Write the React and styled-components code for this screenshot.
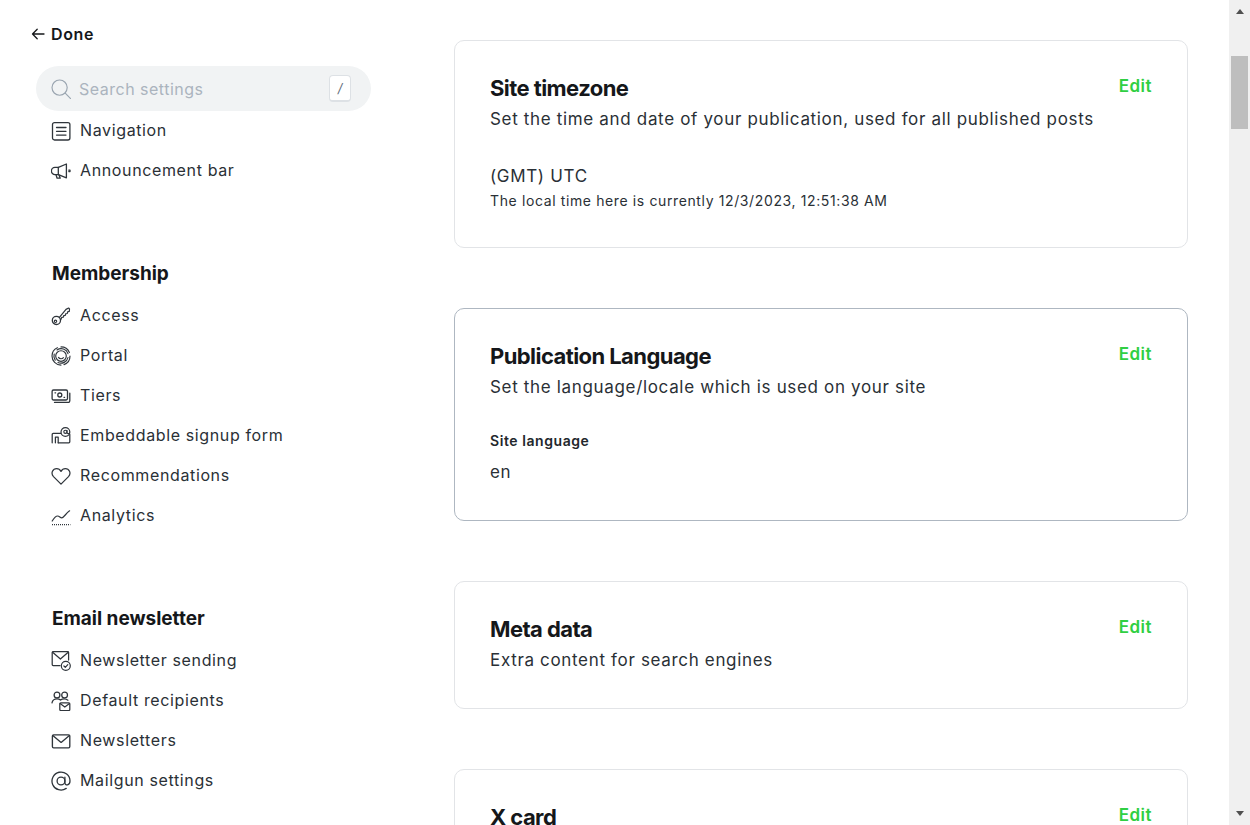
import React from "react";
import styled, { createGlobalStyle } from "styled-components";

const Global = createGlobalStyle`
  html, body { margin: 0; padding: 0; height: 100%; overflow: hidden; background: #fff; }
  body { font-family: Inter, "Liberation Sans", sans-serif; color: #15171a; }
  #root { height: 100%; }
`;

const Shell = styled.div`
  display: flex;
  height: 825px;
  overflow: hidden;
`;

const Page = styled.div`
  flex: 1;
  display: flex;
  min-width: 0;
  overflow: hidden;
`;

const Sidebar = styled.aside`
  width: 418px;
  flex: none;
  padding: 0 0 0 36px;
  box-sizing: content-box;
`;

const BackLink = styled.a`
  display: flex;
  align-items: center;
  gap: 6px;
  height: 20px;
  margin: 24px 0 0 -5px;
  font-size: 16px;
  font-weight: 600;
  letter-spacing: 0.6px;
  color: #15171a;
`;

const SearchBox = styled.div`
  display: flex;
  align-items: center;
  width: 335px;
  height: 45px;
  margin-top: 22px;
  padding: 0 20px 0 15px;
  box-sizing: border-box;
  border-radius: 23px;
  background: #f1f3f4;
`;

const Placeholder = styled.span`
  flex: 1;
  margin-left: 8px;
  font-size: 16px;
  letter-spacing: 0.5px;
  color: #abb4be;
`;

const Kbd = styled.span`
  width: 22px;
  height: 27px;
  box-sizing: border-box;
  display: flex;
  align-items: center;
  justify-content: center;
  border: 1px solid #dde1e5;
  border-bottom-width: 2px;
  border-radius: 4px;
  background: #fff;
  font-size: 13px;
  font-style: italic;
  color: #626d79;
`;

const Group = styled.section`
  margin-bottom: 71px;
`;

const GroupTitle = styled.h2`
  margin: 0 0 10px 16px;
  height: 24px;
  line-height: 24px;
  font-size: 19px;
  font-weight: 700;
  letter-spacing: -0.02px;
  color: #15171a;
`;

const Item = styled.a`
  display: flex;
  align-items: center;
  gap: 9px;
  height: 40px;
  padding-left: 15px;
  font-size: 16px;
  letter-spacing: 0.63px;
  color: #2a3036;
`;

const ItemLabel = styled.span`
  margin-bottom: 2px;
`;

const IconSvg = styled.svg`
  width: 20px;
  height: 20px;
  flex: none;
  fill: none;
  stroke: #2f353b;
  stroke-width: 1.15;
  stroke-linecap: round;
  stroke-linejoin: round;
`;

const Content = styled.main`
  flex: 1;
  min-width: 0;
  padding: 40px 41px 0 0;
  display: flex;
  flex-direction: column;
  gap: 60px;
`;

const Card = styled.section`
  flex: none;
  display: flex;
  justify-content: space-between;
  align-items: flex-start;
  box-sizing: border-box;
  min-height: ${(p) => p.$minHeight || 0}px;
  padding: 33px 35px 35px;
  border: 1px solid ${(p) => (p.$active ? "#aeb7c1" : "#e2e4e7")};
  border-radius: 10px;
  background: #fff;
`;

const CardBody = styled.div`
  min-width: 0;
`;

const CardTitle = styled.h3`
  margin: 0;
  height: 28px;
  line-height: 28px;
  font-size: 22px;
  font-weight: 700;
  letter-spacing: -0.57px;
  color: #15171a;
`;

const CardDesc = styled.p`
  margin: 4px 0 0;
  height: 26px;
  line-height: 26px;
  font-size: 17px;
  letter-spacing: 0.665px;
  color: #2a3036;
`;

const Value = styled.div`
  margin-top: ${(p) => p.$top}px;
  line-height: 26px;
  font-size: 17px;
  letter-spacing: 0.665px;
  color: #2a3036;
`;

const Hint = styled.div`
  margin-top: 2px;
  line-height: 20px;
  font-size: 14px;
  letter-spacing: 0.62px;
  color: #2a3036;
`;

const FieldLabel = styled.div`
  margin-top: 31px;
  line-height: 20px;
  font-size: 14px;
  font-weight: 600;
  letter-spacing: 0.57px;
  color: #22272c;
`;

const EditButton = styled.a`
  line-height: 24px;
  font-size: 17px;
  font-weight: 600;
  letter-spacing: 0.5px;
  color: #30cf43;
`;

const Scrollbar = styled.div`
  flex: none;
  width: 21px;
  height: 825px;
  display: flex;
  flex-direction: column;
  align-items: center;
  background: #f0f0f0;
`;

const Arrow = styled.span`
  width: 0;
  height: 0;
  flex: none;
  border-left: 4.5px solid transparent;
  border-right: 4.5px solid transparent;
  ${(p) =>
    p.$down
      ? "border-top: 5px solid #505050; margin: auto 0 9px;"
      : "border-bottom: 5px solid #505050; margin-top: 9px;"}
`;

const Thumb = styled.div`
  width: 17px;
  height: 73px;
  margin-top: 42px;
  flex: none;
  background: #bebebe;
`;

const Icon = ({ children }) => <IconSvg viewBox="0 0 20 20">{children}</IconSvg>;

const icons = {
  nav: (
    <>
      <rect x="1.5" y="1.6" width="17.4" height="17.4" rx="2" strokeWidth="1.3" />
      <path d="M5.5 6.5h9.5M5.5 10.3h9.5M5.5 14.1h9.5" strokeWidth="1.3" />
    </>
  ),
  megaphone: (
    <>
      <path d="M15.4 3v13.8L7.4 13.6H4a3 3 0 0 1 0-7.2h3.4z" strokeWidth="1.3" />
      <path d="M7.3 6.4v7.2M5 13.8l1.1 3.4h3.1l-1-3M17.8 9.2h1.2v1.4h-1.2" strokeWidth="1.3" />
    </>
  ),
  key: (
    <>
      <circle cx="5.4" cy="14.4" r="4.1" strokeWidth="1.3" />
      <circle cx="4.5" cy="15.3" r="1.2" />
      <path d="M8.2 11.6 15 3.4l2.6-1.4.9.9-.2 2.5-1.7.4-.3 1.7-1.7.3-.3 1.6-1.6.2-.3 1.5-1.6.2-.9 2.2" strokeWidth="1.2" />
    </>
  ),
  portal: (
    <>
      <path d="M10 .9a9.1 9.1 0 0 1 8.4 5.6M19 10a9.1 9.1 0 0 1-6 8.6M10 19.1A9.1 9.1 0 0 1 1 10a9 9 0 0 1 5.4-8.3" />
      <path d="M6 4a7.2 7.2 0 0 1 11 3.6M17 11.5A7.2 7.2 0 0 1 7 16.5M4.2 14.2A7.2 7.2 0 0 1 3.2 8" />
      <circle cx="10" cy="10" r="5.3" />
      <path d="M7.5 11.4A3 3 0 0 0 12.4 11.6" />
    </>
  ),
  tiers: (
    <>
      <rect x="1.1" y="4" width="15.4" height="10" rx="1.4" strokeWidth="1.3" />
      <circle cx="8.8" cy="9" r="2" strokeWidth="1.3" />
      <path d="M4 6.8h.6M13 11.3h.6" strokeWidth="1.3" />
      <path d="M18.8 7.2v7.6a1.6 1.6 0 0 1-1.6 1.6H3.5" strokeWidth="1.3" />
    </>
  ),
  embed: (
    <>
      <path d="M9.6 7.4H2.2a1 1 0 0 0-1 1v8.4" strokeWidth="1.25" />
      <path d="M18.8 8.4v7.4a1 1 0 0 1-1 1H7.2" strokeWidth="1.25" />
      <path d="M4.4 16.8v-5.6h2.8v5.6" strokeWidth="1.25" />
      <circle cx="14.4" cy="6" r="4.4" strokeWidth="1.25" />
      <circle cx="14.4" cy="5.8" r="1.6" />
      <path d="M16 4.4v2.2c0 1.2 1.6 1.2 2.4.6" />
    </>
  ),
  heart: (
    <path d="M10 18.1 2.5 10.6C-.7 7 2 2.7 5.6 2.7c1.8 0 3.4.9 4.4 2.7 1-1.8 2.6-2.7 4.4-2.7 3.6 0 6.3 4.3 3.1 7.9z" strokeWidth="1.25" />
  ),
  analytics: (
    <>
      <path d="M1.2 15c2-3.3 3.6-5 5.4-5 2 0 2.4 1.8 4.2 1.8 2 0 4-4.4 7.8-7" strokeWidth="1.2" />
      <path d="M1 18.6h18.4" strokeDasharray="1 1" strokeLinecap="butt" strokeWidth="1.3" />
    </>
  ),
  sending: (
    <>
      <path d="M9 14.6H2.2a1 1 0 0 1-1-1V1.6a1 1 0 0 1 1-1h14.4a1 1 0 0 1 1 1V9" strokeWidth="1.25" />
      <path d="M1.6 1.2l7.8 6.8 7.8-6.8" strokeWidth="1.25" />
      <circle cx="14.8" cy="14.8" r="4.5" strokeWidth="1.2" />
      <path d="M12.9 15l1.4 1.4 2.5-2.8" strokeWidth="1.2" />
    </>
  ),
  recipients: (
    <>
      <circle cx="6" cy="4" r="2.9" strokeWidth="1.25" />
      <circle cx="13.6" cy="4" r="2.9" strokeWidth="1.25" />
      <path d="M1 11.8c.5-2.6 2.4-4 5-4 1.5 0 2.6.4 3.5 1.2 1-.8 2.2-1.2 3.7-1.2 1.5 0 2.8.5 3.7 1.4" strokeWidth="1.25" />
      <rect x="8.8" y="11.9" width="10" height="7.6" rx="1" strokeWidth="1.25" />
      <path d="M9.1 12.6l4.7 3.4 4.7-3.4" strokeWidth="1.25" />
    </>
  ),
  mail: (
    <>
      <rect x="1.4" y="3.8" width="17.4" height="13" rx="1.2" strokeWidth="1.35" />
      <path d="M1.8 4.6l8.3 6.8 8.3-6.8" strokeWidth="1.35" />
    </>
  ),
  at: (
    <>
      <circle cx="10" cy="10" r="3.9" strokeWidth="1.3" />
      <path d="M13.9 6.2v5.6c0 3.2 5.1 3 5.1-1.8a9 9 0 1 0-3.8 7.4" strokeWidth="1.3" />
    </>
  ),
};

const NavItem = ({ icon, children }) => (
  <Item>
    <Icon>{icons[icon]}</Icon>
    <ItemLabel>{children}</ItemLabel>
  </Item>
);

const BackArrow = () => (
  <svg width="14" height="14" viewBox="0 0 14 14" fill="none" stroke="#15171a" strokeWidth="1.3" strokeLinecap="round" strokeLinejoin="round">
    <path d="M13 7H1.5M6.2 2.3 1.5 7l4.7 4.7" />
  </svg>
);

const SearchIcon = () => (
  <svg width="20" height="20" viewBox="0 0 20 20" fill="none" stroke="#9aa5b0" strokeWidth="1.15" strokeLinecap="round">
    <circle cx="8.6" cy="8.6" r="7.6" />
    <path d="M14.2 14.2 19.6 19.6" />
  </svg>
);

const SettingsCard = ({ title, desc, active, minHeight, children }) => (
  <Card $active={active} $minHeight={minHeight}>
    <CardBody>
      <CardTitle>{title}</CardTitle>
      {desc && <CardDesc>{desc}</CardDesc>}
      {children}
    </CardBody>
    <EditButton>Edit</EditButton>
  </Card>
);

export default function App() {
  return (
    <Shell>
      <Global />
      <Page>
        <Sidebar>
          <BackLink>
            <BackArrow />
            Done
          </BackLink>
          <SearchBox>
            <SearchIcon />
            <Placeholder>Search settings</Placeholder>
            <Kbd>/</Kbd>
          </SearchBox>
          <Group>
            <NavItem icon="nav">Navigation</NavItem>
            <NavItem icon="megaphone">Announcement bar</NavItem>
          </Group>
          <Group>
            <GroupTitle>Membership</GroupTitle>
            <NavItem icon="key">Access</NavItem>
            <NavItem icon="portal">Portal</NavItem>
            <NavItem icon="tiers">Tiers</NavItem>
            <NavItem icon="embed">Embeddable signup form</NavItem>
            <NavItem icon="heart">Recommendations</NavItem>
            <NavItem icon="analytics">Analytics</NavItem>
          </Group>
          <Group>
            <GroupTitle>Email newsletter</GroupTitle>
            <NavItem icon="sending">Newsletter sending</NavItem>
            <NavItem icon="recipients">Default recipients</NavItem>
            <NavItem icon="mail">Newsletters</NavItem>
            <NavItem icon="at">Mailgun settings</NavItem>
          </Group>
        </Sidebar>
        <Content>
          <SettingsCard title="Site timezone" desc="Set the time and date of your publication, used for all published posts" minHeight={208}>
            <Value $top={31}>(GMT) UTC</Value>
            <Hint>The local time here is currently 12/3/2023, 12:51:38 AM</Hint>
          </SettingsCard>
          <SettingsCard title="Publication Language" desc="Set the language/locale which is used on your site" active minHeight={213}>
            <FieldLabel>Site language</FieldLabel>
            <Value $top={8}>en</Value>
          </SettingsCard>
          <SettingsCard title="Meta data" desc="Extra content for search engines" minHeight={128} />
          <SettingsCard title="X card" minHeight={128} />
        </Content>
      </Page>
      <Scrollbar>
        <Arrow />
        <Thumb />
        <Arrow $down />
      </Scrollbar>
    </Shell>
  );
}
